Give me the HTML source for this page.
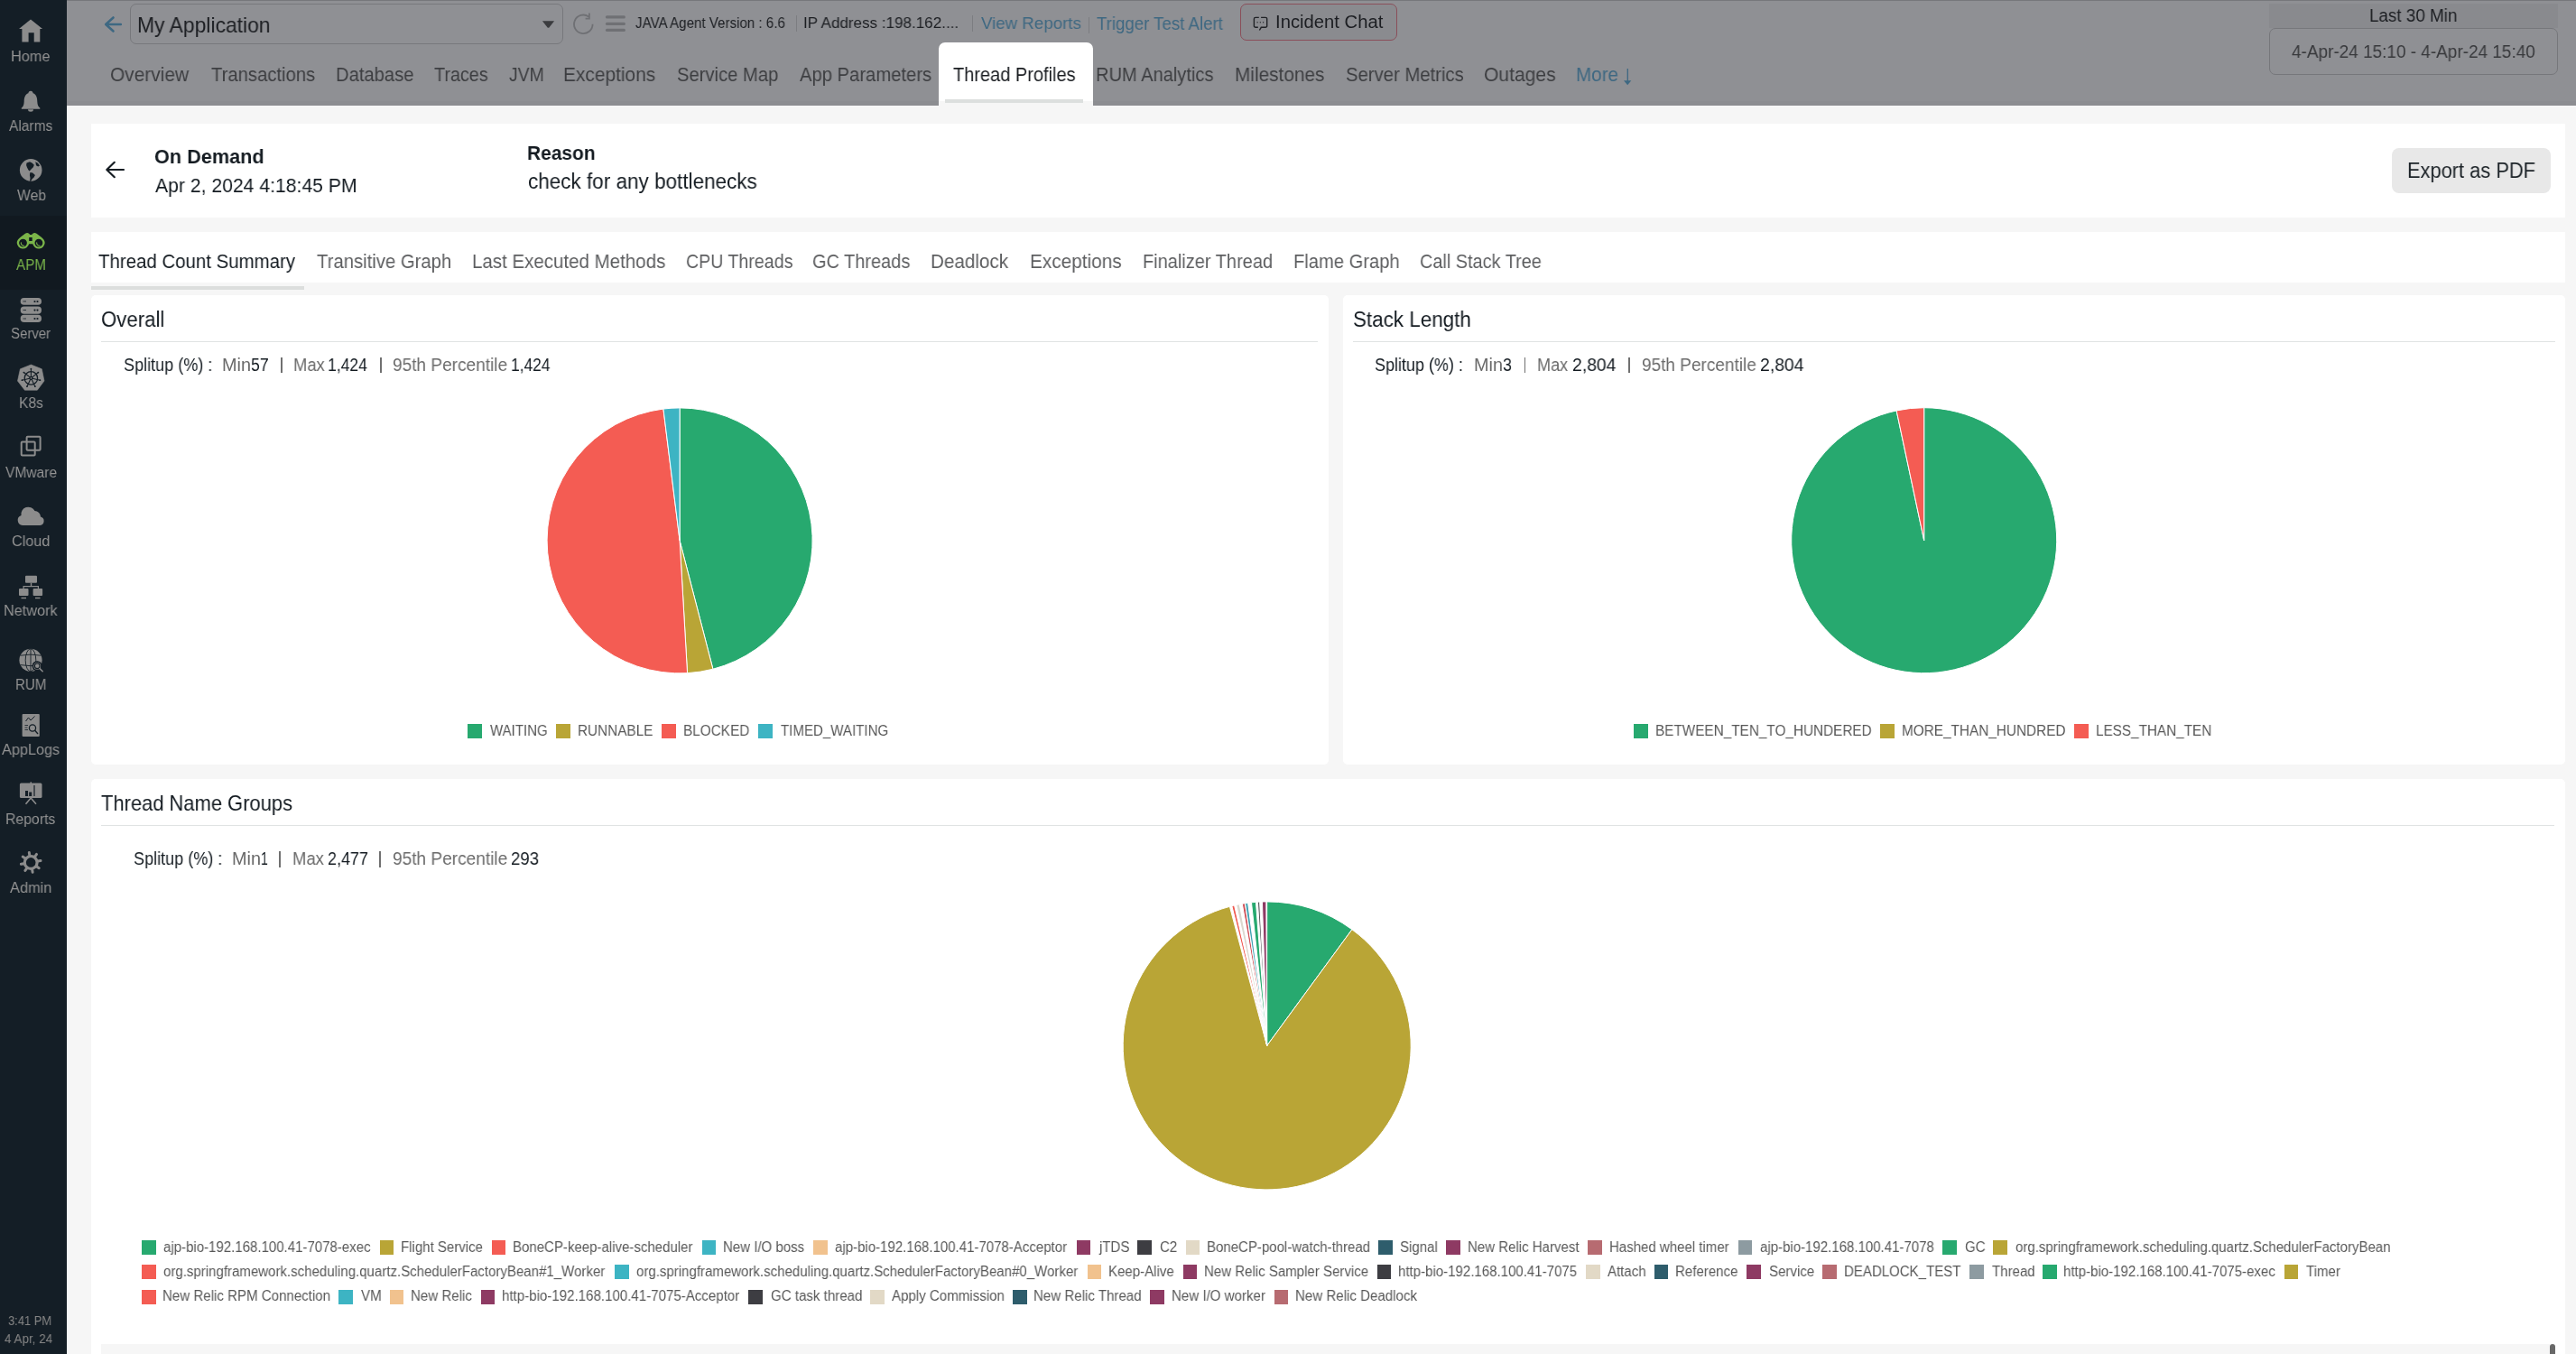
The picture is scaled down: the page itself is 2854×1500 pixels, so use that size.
<!DOCTYPE html>
<html><head><meta charset="utf-8">
<style>
html,body{margin:0;padding:0;overflow:hidden;}
body{width:2854px;height:1500px;overflow:hidden;position:relative;background:#f6f6f6;font-family:"Liberation Sans",sans-serif;}
.abs{position:absolute;}
.t{position:absolute;white-space:nowrap;transform-origin:0 0;font-family:"Liberation Sans",sans-serif;will-change:transform;}
.sq{position:absolute;width:15.7px;height:15.7px;}
.bar{position:absolute;width:1.5px;height:17.5px;background:#707070;}
#sb{position:absolute;left:0;top:0;width:74px;height:1500px;background:#141e26;}
#hd{position:absolute;left:74px;top:0;width:2780px;height:117px;background:#8f9094;}
.card{position:absolute;background:#fff;}
.line{position:absolute;height:1px;background:#e0e3e3;}
.sep{position:absolute;width:1px;background:#7c7d81;}
</style></head><body>
<div id="sb"></div>
<div class="abs" style="left:0;top:239px;width:74px;height:82px;background:#111920"></div>
<div id="hd"></div>
<div class="abs" style="left:74px;top:0;width:2780px;height:1px;background:#76777b"></div>
<div class="abs" style="left:74px;top:111.5px;width:2780px;height:5.5px;background:#8c8d91"></div>

<!-- header widgets -->
<div class="abs" style="left:144px;top:4px;width:477.6px;height:42.6px;border:1px solid #77787c;border-radius:7px;"></div>
<div class="sep" style="left:882.2px;top:16.5px;height:18px"></div>
<div class="sep" style="left:1077.1px;top:16.5px;height:18px"></div>
<div class="sep" style="left:1205.9px;top:18.9px;height:17.7px"></div>
<div class="abs" style="left:1374px;top:4.2px;width:172px;height:38.5px;border:1px solid #8a4f5a;border-radius:7px;background:#8a8b8f"></div>
<div class="abs" style="left:1040px;top:47px;width:170.8px;height:70px;background:#fff;border-radius:7px 7px 0 0"></div>
<div class="abs" style="left:1040px;top:111.5px;width:170.8px;height:5.5px;background:#f6f6f6"></div>
<div class="abs" style="left:1047px;top:110px;width:153px;height:3.6px;background:#dcdfde"></div>
<div class="abs" style="left:2514px;top:4px;width:320px;height:26.5px;background:#898a8e"></div>
<div class="abs" style="left:2514px;top:31.3px;width:318px;height:49.4px;border:1px solid #76777b;border-radius:7px"></div>

<svg class="abs" style="left:0;top:0" width="2854" height="120" viewBox="0 0 2854 120">
 <!-- header back arrow -->
 <path d="M133.8 27H117.5M125.5 19.5L117.2 27L125.5 34.5" fill="none" stroke="#3e6882" stroke-width="2.6" stroke-linecap="round" stroke-linejoin="round"/>
 <!-- caret -->
 <path d="M600.9 23.3H614.1L608.6 30.2Q607.5 31.3 606.4 30.2Z" fill="#3a3b3e"/>
 <!-- refresh -->
 <path d="M652.2 18.4A10.3 10.3 0 1 0 656.6 26.8" fill="none" stroke="#6f7074" stroke-width="1.8"/>
 <path d="M652.9 14.6V20.7H648.6" fill="none" stroke="#6f7074" stroke-width="1.8"/>
 <!-- hamburger -->
 <rect x="670.9" y="17.2" width="22" height="3.3" rx="1.6" fill="#6f7074"/>
 <rect x="670.9" y="24.7" width="22" height="3.3" rx="1.6" fill="#6f7074"/>
 <rect x="670.9" y="31.8" width="22" height="3.3" rx="1.6" fill="#6f7074"/>
 <!-- chat icon -->
 <path d="M1394.8 19.4H1391A1.6 1.6 0 0 0 1389.4 21V28.7A1.6 1.6 0 0 0 1391 30.3H1393.8M1397.1 19.4H1402.1A1.6 1.6 0 0 1 1403.7 21V28.7A1.6 1.6 0 0 1 1402.1 30.3H1397.3L1395.4 33.5" fill="none" stroke="#202226" stroke-width="1.4"/>
 <ellipse cx="1393.1" cy="24.7" rx="0.6" ry="0.8" fill="#202226"/><ellipse cx="1396.3" cy="24.7" rx="0.6" ry="0.8" fill="#202226"/><ellipse cx="1399.6" cy="24.7" rx="0.6" ry="0.8" fill="#202226"/>
 <!-- More arrow -->
 <path d="M1803.3 76V91" fill="none" stroke="#3e6882" stroke-width="1.3"/><path d="M1799 89.3H1807.3L1803.2 94.2Z" fill="#3e6882"/>
</svg>

<!-- content cards -->
<div class="card" style="left:101px;top:137px;width:2741px;height:104px"></div>
<div class="abs" style="left:2650px;top:164px;width:176px;height:49.7px;background:#e8e8e8;border-radius:8px"></div>
<div class="card" style="left:101px;top:257px;width:2741px;height:56px"></div>
<div class="abs" style="left:101px;top:317px;width:236px;height:4px;background:#dcdedd"></div>
<div class="card" style="left:101px;top:327px;width:1371px;height:520px;border-radius:5px"></div>
<div class="card" style="left:1488px;top:327px;width:1354px;height:520px;border-radius:5px"></div>
<div class="card" style="left:101px;top:863px;width:2741px;height:637px;border-radius:5px 5px 0 0"></div>
<div class="line" style="left:112px;top:378px;width:1348px"></div>
<div class="line" style="left:1499px;top:378px;width:1331.5px"></div>
<div class="line" style="left:112px;top:914px;width:2718px"></div>
<div class="abs" style="left:112px;top:1489px;width:2712.6px;height:11px;background:#f6f6f6"></div>
<div class="abs" style="left:2825px;top:1489px;width:6px;height:11px;background:#686868;border-radius:3px 3px 0 0"></div>

<svg class="abs" style="left:0;top:120px" width="200" height="100" viewBox="0 120 200 100">
 <path d="M137 188H118.5M126.8 179.8L118.3 188L126.8 196.2" fill="none" stroke="#161d23" stroke-width="2.2" stroke-linecap="round" stroke-linejoin="round"/>
</svg>

<svg class="abs" style="left:0;top:0" width="2854" height="1500" viewBox="0 0 2854 1500"><path d="M753.10 598.90L753.10 451.90A147 147 0 0 1 789.91 741.22Z" fill="#27a96f" stroke="#fff" stroke-width="1" stroke-linejoin="round"/><path d="M753.10 598.90L789.91 741.22A147 147 0 0 1 761.56 745.66Z" fill="#b9a536" stroke="#fff" stroke-width="1" stroke-linejoin="round"/><path d="M753.10 598.90L761.56 745.66A147 147 0 0 1 734.93 453.03Z" fill="#f45c53" stroke="#fff" stroke-width="1" stroke-linejoin="round"/><path d="M753.10 598.90L734.93 453.03A147 147 0 0 1 753.10 451.90Z" fill="#3db4c3" stroke="#fff" stroke-width="1" stroke-linejoin="round"/><path d="M2131.70 598.70L2131.70 451.70A147 147 0 1 1 2101.14 454.91Z" fill="#27a96f" stroke="#fff" stroke-width="1" stroke-linejoin="round"/><path d="M2131.70 598.70L2101.14 454.91A147 147 0 0 1 2131.70 451.70Z" fill="#f45c53" stroke="#fff" stroke-width="1" stroke-linejoin="round"/><path d="M1403.70 1158.40L1403.70 998.90A159.5 159.5 0 0 1 1497.90 1029.69Z" fill="#27a96f" stroke="#fff" stroke-width="1" stroke-linejoin="round"/><path d="M1403.70 1158.40L1497.90 1029.69A159.5 159.5 0 1 1 1362.42 1004.33Z" fill="#b9a536" stroke="#fff" stroke-width="1" stroke-linejoin="round"/><path d="M1403.70 1158.40L1364.84 1003.71A159.5 159.5 0 0 1 1367.55 1003.05Z" fill="#f0584f" stroke="#fff" stroke-width="1" stroke-linejoin="round"/><path d="M1403.70 1158.40L1369.72 1002.56A159.5 159.5 0 0 1 1373.27 1001.83Z" fill="#dcd8cf" stroke="#fff" stroke-width="1" stroke-linejoin="round"/><path d="M1403.70 1158.40L1376.28 1001.28A159.5 159.5 0 0 1 1379.30 1000.78Z" fill="#cf5158" stroke="#fff" stroke-width="1" stroke-linejoin="round"/><path d="M1403.70 1158.40L1379.57 1000.74A159.5 159.5 0 0 1 1382.61 1000.30Z" fill="#41a3b3" stroke="#fff" stroke-width="1" stroke-linejoin="round"/><path d="M1403.70 1158.40L1386.47 999.83A159.5 159.5 0 0 1 1391.46 999.37Z" fill="#27a96f" stroke="#fff" stroke-width="1" stroke-linejoin="round"/><path d="M1403.70 1158.40L1393.41 999.23A159.5 159.5 0 0 1 1395.63 999.10Z" fill="#55565a" stroke="#fff" stroke-width="1" stroke-linejoin="round"/><path d="M1403.70 1158.40L1398.41 998.99A159.5 159.5 0 0 1 1402.86 998.90Z" fill="#8e3a63" stroke="#fff" stroke-width="1" stroke-linejoin="round"/></svg>
<div class="sq" style="left:518.10px;top:802.30px;background:#27a96f"></div><div class="sq" style="left:616.10px;top:802.30px;background:#b9a536"></div><div class="sq" style="left:733.20px;top:802.30px;background:#f45c53"></div><div class="sq" style="left:840.30px;top:802.30px;background:#3db4c3"></div><div class="sq" style="left:1810.20px;top:802.30px;background:#27a96f"></div><div class="sq" style="left:2083.10px;top:802.30px;background:#b9a536"></div><div class="sq" style="left:2298.30px;top:802.30px;background:#f45c53"></div><div class="sq" style="left:157.00px;top:1374.10px;background:#27a96f"></div><div class="sq" style="left:420.54px;top:1374.10px;background:#b9a536"></div><div class="sq" style="left:544.64px;top:1374.10px;background:#f45c53"></div><div class="sq" style="left:777.78px;top:1374.10px;background:#3db4c3"></div><div class="sq" style="left:900.95px;top:1374.10px;background:#f1c28e"></div><div class="sq" style="left:1192.65px;top:1374.10px;background:#8e3a63"></div><div class="sq" style="left:1260.32px;top:1374.10px;background:#3d3d42"></div><div class="sq" style="left:1313.60px;top:1374.10px;background:#e2d9c6"></div><div class="sq" style="left:1526.91px;top:1374.10px;background:#2e5d6c"></div><div class="sq" style="left:1602.13px;top:1374.10px;background:#8e3a63"></div><div class="sq" style="left:1759.18px;top:1374.10px;background:#b76b71"></div><div class="sq" style="left:1925.55px;top:1374.10px;background:#8d9ba1"></div><div class="sq" style="left:2152.47px;top:1374.10px;background:#27a96f"></div><div class="sq" style="left:2208.47px;top:1374.10px;background:#b9a536"></div><div class="sq" style="left:157.00px;top:1401.20px;background:#f45c53"></div><div class="sq" style="left:680.85px;top:1401.20px;background:#3db4c3"></div><div class="sq" style="left:1204.70px;top:1401.20px;background:#f1c28e"></div><div class="sq" style="left:1310.53px;top:1401.20px;background:#8e3a63"></div><div class="sq" style="left:1525.75px;top:1401.20px;background:#3d3d42"></div><div class="sq" style="left:1756.94px;top:1401.20px;background:#e2d9c6"></div><div class="sq" style="left:1832.70px;top:1401.20px;background:#2e5d6c"></div><div class="sq" style="left:1935.19px;top:1401.20px;background:#8e3a63"></div><div class="sq" style="left:2019.40px;top:1401.20px;background:#b76b71"></div><div class="sq" style="left:2182.11px;top:1401.20px;background:#8d9ba1"></div><div class="sq" style="left:2262.89px;top:1401.20px;background:#27a96f"></div><div class="sq" style="left:2530.73px;top:1401.20px;background:#b9a536"></div><div class="sq" style="left:157.00px;top:1429.10px;background:#f45c53"></div><div class="sq" style="left:375.26px;top:1429.10px;background:#3db4c3"></div><div class="sq" style="left:431.57px;top:1429.10px;background:#f1c28e"></div><div class="sq" style="left:532.51px;top:1429.10px;background:#8e3a63"></div><div class="sq" style="left:829.44px;top:1429.10px;background:#3d3d42"></div><div class="sq" style="left:964.00px;top:1429.10px;background:#e2d9c6"></div><div class="sq" style="left:1122.02px;top:1429.10px;background:#2e5d6c"></div><div class="sq" style="left:1274.08px;top:1429.10px;background:#8e3a63"></div><div class="sq" style="left:1411.67px;top:1429.10px;background:#b76b71"></div>
<div class="bar" style="left:311.05px;top:395.70px"></div><div class="bar" style="left:421.05px;top:395.70px"></div><div class="bar" style="left:1688.75px;top:395.70px"></div><div class="bar" style="left:1804.25px;top:395.70px"></div><div class="bar" style="left:309.25px;top:943.20px"></div><div class="bar" style="left:420.05px;top:943.20px"></div>

<!-- sidebar icons -->
<svg class="abs" style="left:0;top:0" width="74" height="1000" viewBox="0 0 74 1000">
 <g fill="#8c8c8c">
  <!-- home -->
  <path d="M34 21.6L47.1 32H44.3V46.6H37.7V36.2H31.6V46.6H24.4V32H21Z"/>
  <!-- bell -->
  <path d="M34 100.8C36 100.8 36.5 102.5 36.6 103.2C40.5 104.5 41.2 108.5 41.3 112.5C41.4 116.5 42.5 118.3 44.3 119.5V120.8H23.8V119.5C25.6 118.3 26.6 116.5 26.7 112.5C26.8 108.5 27.5 104.5 31.4 103.2C31.5 102.5 32 100.8 34 100.8Z"/>
  <path d="M31 121.3H37A3 2.5 0 0 1 31 121.3Z"/>
  <!-- globe -->
  <circle cx="34.2" cy="188.4" r="12.3"/>
 </g>
 <path d="M29.5 180.5L33 179.3L35.5 180.5L37.8 182.8L36.8 185.3L35 187L33.6 188.6L32.6 189.6L31.4 188.2L30 185.6L29.1 183Z M39.3 179.3L42 180.8L44 183.6L42.2 184.6L40 183.2Z M33.4 190.9L36.2 191.6L38.9 194L37.6 196.6L35.6 198.2L34.2 200.8L33 200.8L33.5 197.2L32.9 194Z" fill="#141e26"/>
 <!-- binoculars -->
 <path fill="#7ab54a" fill-rule="evenodd" d="M18.7 269.1A6.8 6.8 0 0 0 32.1 270.2H36.3A6.8 6.8 0 0 0 49.7 269.1C49.7 266.5 47.9 264.5 45.5 262.5L40.5 258.8Q38.2 257.2 36.3 258.8L35.2 260H33.2L32.1 258.8Q30.2 257.2 27.9 258.8L23 262.5C20.5 264.5 18.7 266.5 18.7 269.1Z M21.1 269.1A4.4 4.4 0 1 0 29.9 269.1A4.4 4.4 0 1 0 21.1 269.1Z M38.5 269.1A4.4 4.4 0 1 0 47.3 269.1A4.4 4.4 0 1 0 38.5 269.1Z M32.2 263.1H35.7V266.9H32.2Z"/>
 <path d="M23.3 268.8A3 3 0 0 0 26.8 272.2M40.7 268.8A3 3 0 0 0 44.2 272.2" fill="none" stroke="#7ab54a" stroke-width="1.1" stroke-linecap="round"/>
 <circle cx="30.5" cy="261.5" r="0.4" fill="#d9a520"/><circle cx="38.5" cy="261.5" r="0.4" fill="#d9a520"/>
 <g fill="#8c8c8c">
  <!-- server -->
  <rect x="22.7" y="330" width="23.3" height="7.7" rx="3.8"/>
  <rect x="22.7" y="339.4" width="23.3" height="8.3" rx="4"/>
  <rect x="22.7" y="348.8" width="23.3" height="8.3" rx="4"/>
 </g>
 <g fill="#141e26">
  <rect x="25.5" y="333.5" width="3.5" height="0.8"/><circle cx="38.5" cy="334" r="1.1"/><circle cx="41.5" cy="334" r="1.1"/>
  <rect x="25.5" y="343.2" width="3.5" height="0.8"/><circle cx="38.5" cy="343.6" r="1.1"/><circle cx="41.5" cy="343.6" r="1.1"/>
  <rect x="25.5" y="352.6" width="3.5" height="0.8"/><circle cx="38.5" cy="353" r="1.1"/><circle cx="41.5" cy="353" r="1.1"/>
 </g>
 <!-- k8s heptagon -->
 <path d="M34.4 404L46.3 408.8L49 422L41.3 432.2H27.4L19.5 422L22.4 408.8Z" fill="#8c8c8c" stroke="#8c8c8c" stroke-width="0.6" stroke-linejoin="round"/>
 <circle cx="34.4" cy="418.9" r="7.2" fill="none" stroke="#141e26" stroke-width="1.3"/>
 <circle cx="34.4" cy="418.9" r="1.5" fill="none" stroke="#141e26" stroke-width="1.3"/>
 <path d="M34.40 417.30L34.40 408.60M35.65 417.90L42.45 412.48M35.96 419.26L44.44 421.19M35.09 420.34L38.87 428.18M33.71 420.34L29.93 428.18M32.84 419.26L24.36 421.19M33.15 417.90L26.35 412.48" stroke="#141e26" stroke-width="1.1" stroke-linecap="round"/>
 <circle cx="34.40" cy="408.70" r="0.9" fill="#141e26"/><circle cx="42.37" cy="412.54" r="0.9" fill="#141e26"/><circle cx="44.34" cy="421.17" r="0.9" fill="#141e26"/><circle cx="38.83" cy="428.09" r="0.9" fill="#141e26"/><circle cx="29.97" cy="428.09" r="0.9" fill="#141e26"/><circle cx="24.46" cy="421.17" r="0.9" fill="#141e26"/><circle cx="26.43" cy="412.54" r="0.9" fill="#141e26"/>
 <!-- vmware -->
 <g fill="none" stroke="#8c8c8c" stroke-width="2">
  <rect x="29.6" y="483.7" width="15" height="15" rx="1"/>
  <rect x="23.7" y="489.6" width="15" height="15" rx="1"/>
 </g>
 <!-- cloud -->
 <path d="M25 581.9A5.6 5.6 0 0 1 23.5 571A8 8 0 0 1 38.5 566A6.5 6.5 0 0 1 45 572.5A4.8 4.8 0 0 1 44.5 581.9Z" fill="#8c8c8c"/>
 <!-- network -->
 <g fill="#8c8c8c">
  <rect x="28" y="637.7" width="13" height="8" rx="1"/>
  <rect x="21" y="652" width="10.5" height="8" rx="1"/>
  <rect x="36.6" y="652" width="10.5" height="8" rx="1"/>
  <rect x="33.8" y="645.7" width="1.4" height="4"/>
  <rect x="26" y="649" width="17" height="1.2"/>
  <rect x="25.5" y="649" width="1.2" height="3"/><rect x="41.8" y="649" width="1.2" height="3"/>
  <rect x="23.5" y="661.8" width="5.5" height="1.4"/><rect x="39" y="661.8" width="5.5" height="1.4"/>
 </g>
 <!-- rum globe -->
 <circle cx="34" cy="731.3" r="12.6" fill="#8c8c8c"/>
 <g fill="none" stroke="#141e26" stroke-width="0.9">
  <ellipse cx="34" cy="731.3" rx="5.8" ry="12.6"/><path d="M34 718.7V743.9M22.5 726.2Q34 724 45.5 726.2M22.5 736.6Q34 738.8 45.5 736.6"/>
 </g>
 <circle cx="41.2" cy="737.8" r="5.6" fill="#141e26"/>
 <circle cx="41.2" cy="737.8" r="3.9" fill="#8c8c8c"/>
 <circle cx="41.2" cy="737.8" r="2.8" fill="#8c8c8c" stroke="#141e26" stroke-width="1.1"/>
 <path d="M44 740.6L47.2 743.8" stroke="#8c8c8c" stroke-width="1.5" stroke-linecap="round"/>
 <!-- applogs -->
 <rect x="24.6" y="791" width="19.2" height="25" rx="1" fill="#8c8c8c"/>
 <path d="M28.5 799L31.5 795L34 798L38.5 793.5" fill="none" stroke="#141e26" stroke-width="1"/>
 <path d="M27.5 803.5H31M27.5 806H30.5M27.5 808.5H31" stroke="#141e26" stroke-width="0.8"/>
 <circle cx="36" cy="806.5" r="3.6" fill="none" stroke="#141e26" stroke-width="1.3"/>
 <path d="M38.5 809L42 813" stroke="#141e26" stroke-width="1.3"/>
 <!-- reports -->
 <rect x="21.9" y="867.5" width="24.6" height="16.5" rx="1.5" fill="#8c8c8c"/>
 <rect x="33.5" y="866.3" width="1.5" height="2" fill="#8c8c8c"/>
 <path d="M34.2 884L28.5 890.7M34.2 884L40 890.7" stroke="#8c8c8c" stroke-width="1.6"/>
 <rect x="28" y="876" width="3" height="6" fill="#141e26"/><rect x="32.2" y="877.5" width="3" height="4.5" fill="#141e26"/>
 <rect x="37" y="870" width="2" height="12" fill="#141e26" opacity="0.6"/>
 <!-- gear -->
 <circle cx="34.2" cy="955.4" r="6.9" fill="none" stroke="#8c8c8c" stroke-width="3.2"/>
 <path d="M32.90 948.01L32.29 944.57M38.50 949.26L40.51 946.39M41.59 954.10L45.03 953.49M40.34 959.70L43.21 961.71M35.50 962.79L36.11 966.23M29.90 961.54L27.89 964.41M26.81 956.70L23.37 957.31M28.06 951.10L25.19 949.09" stroke="#8c8c8c" stroke-width="3" stroke-linecap="round"/>
</svg>

<div class="t" style="left:12.12px;top:55px;font-size:16.7px;line-height:16.7px;color:#939393;transform:scaleX(0.9784);">Home</div>
<div class="t" style="left:10.20px;top:132px;font-size:16.7px;line-height:16.7px;color:#939393;transform:scaleX(0.9307);">Alarms</div>
<div class="t" style="left:18.60px;top:209px;font-size:16.7px;line-height:16.7px;color:#939393;transform:scaleX(0.9428);">Web</div>
<div class="t" style="left:12.00px;top:362px;font-size:16.7px;line-height:16.7px;color:#939393;transform:scaleX(0.8973);">Server</div>
<div class="t" style="left:20.67px;top:439px;font-size:16.7px;line-height:16.7px;color:#939393;transform:scaleX(0.9303);">K8s</div>
<div class="t" style="left:6.10px;top:516px;font-size:16.7px;line-height:16.7px;color:#939393;transform:scaleX(0.9324);">VMware</div>
<div class="t" style="left:13.10px;top:592px;font-size:16.7px;line-height:16.7px;color:#939393;transform:scaleX(0.9718);">Cloud</div>
<div class="t" style="left:3.73px;top:669px;font-size:16.7px;line-height:16.7px;color:#939393;transform:scaleX(0.9744);">Network</div>
<div class="t" style="left:16.79px;top:751px;font-size:16.7px;line-height:16.7px;color:#939393;transform:scaleX(0.9058);">RUM</div>
<div class="t" style="left:2.40px;top:823px;font-size:16.7px;line-height:16.7px;color:#939393;transform:scaleX(0.9735);">AppLogs</div>
<div class="t" style="left:6.15px;top:900px;font-size:16.7px;line-height:16.7px;color:#939393;transform:scaleX(0.9477);">Reports</div>
<div class="t" style="left:11.10px;top:976px;font-size:16.7px;line-height:16.7px;color:#939393;transform:scaleX(0.9804);">Admin</div>
<div class="t" style="left:18.30px;top:286px;font-size:16.7px;line-height:16.7px;color:#7ab54a;transform:scaleX(0.9104);">APM</div>
<div class="t" style="left:8.90px;top:1455px;font-size:15.5px;line-height:15.5px;color:#858585;transform:scaleX(0.8326);">3:41 PM</div>
<div class="t" style="left:5.30px;top:1475px;font-size:15.5px;line-height:15.5px;color:#858585;transform:scaleX(0.8698);">4 Apr, 24</div>
<div class="t" style="left:151.81px;top:17px;font-size:23.2px;line-height:23.2px;color:#1c1e22;transform:scaleX(0.9873);">My Application</div>
<div class="t" style="left:703.90px;top:17px;font-size:17.3px;line-height:17.3px;color:#1c1e22;transform:scaleX(0.8749);">JAVA Agent Version : 6.6</div>
<div class="t" style="left:890.21px;top:17px;font-size:17.3px;line-height:17.3px;color:#1c1e22;transform:scaleX(0.9862);">IP Address :198.162....</div>
<div class="t" style="left:1086.80px;top:16px;font-size:19px;line-height:19px;color:#3e6882;transform:scaleX(0.9844);">View Reports</div>
<div class="t" style="left:1215.40px;top:17px;font-size:19.3px;line-height:19.3px;color:#3e6882;transform:scaleX(0.9665);">Trigger Test Alert</div>
<div class="t" style="left:1413.49px;top:14px;font-size:20.1px;line-height:20.1px;color:#1c1e22;transform:scaleX(1.0083);">Incident Chat</div>
<div class="t" style="left:121.64px;top:72px;font-size:21.7px;line-height:21.7px;color:#3d3e41;transform:scaleX(0.9630);">Overview</div>
<div class="t" style="left:233.50px;top:72px;font-size:21.7px;line-height:21.7px;color:#3d3e41;transform:scaleX(0.9336);">Transactions</div>
<div class="t" style="left:371.57px;top:72px;font-size:21.7px;line-height:21.7px;color:#3d3e41;transform:scaleX(0.9316);">Database</div>
<div class="t" style="left:481.10px;top:72px;font-size:21.7px;line-height:21.7px;color:#3d3e41;transform:scaleX(0.9112);">Traces</div>
<div class="t" style="left:563.70px;top:72px;font-size:21.7px;line-height:21.7px;color:#3d3e41;transform:scaleX(0.8934);">JVM</div>
<div class="t" style="left:624.24px;top:72px;font-size:21.7px;line-height:21.7px;color:#3d3e41;transform:scaleX(0.9635);">Exceptions</div>
<div class="t" style="left:749.80px;top:72px;font-size:21.7px;line-height:21.7px;color:#3d3e41;transform:scaleX(0.9314);">Service Map</div>
<div class="t" style="left:885.70px;top:72px;font-size:21.7px;line-height:21.7px;color:#3d3e41;transform:scaleX(0.9327);">App Parameters</div>
<div class="t" style="left:1055.70px;top:72px;font-size:21.7px;line-height:21.7px;color:#191c20;transform:scaleX(0.9218);">Thread Profiles</div>
<div class="t" style="left:1214.27px;top:72px;font-size:21.7px;line-height:21.7px;color:#3d3e41;transform:scaleX(0.9253);">RUM Analytics</div>
<div class="t" style="left:1368.24px;top:72px;font-size:21.7px;line-height:21.7px;color:#3d3e41;transform:scaleX(0.9590);">Milestones</div>
<div class="t" style="left:1491.00px;top:72px;font-size:21.7px;line-height:21.7px;color:#3d3e41;transform:scaleX(0.9354);">Server Metrics</div>
<div class="t" style="left:1643.63px;top:72px;font-size:21.7px;line-height:21.7px;color:#3d3e41;transform:scaleX(0.9711);">Outages</div>
<div class="t" style="left:1746.05px;top:72px;font-size:21.7px;line-height:21.7px;color:#3e6882;transform:scaleX(0.9514);">More</div>
<div class="t" style="left:2625.45px;top:8px;font-size:19.9px;line-height:19.9px;color:#1c1e22;transform:scaleX(0.9478);">Last 30 Min</div>
<div class="t" style="left:2539.20px;top:48px;font-size:19.9px;line-height:19.9px;color:#38393c;transform:scaleX(0.9530);">4-Apr-24 15:10 - 4-Apr-24 15:40</div>
<div class="t" style="left:171.30px;top:162px;font-size:22.9px;line-height:22.9px;color:#141b21;font-weight:700;transform:scaleX(0.9468);">On Demand</div>
<div class="t" style="left:171.70px;top:194px;font-size:22.9px;line-height:22.9px;color:#141b21;transform:scaleX(0.9247);">Apr 2, 2024 4:18:45 PM</div>
<div class="t" style="left:583.98px;top:158px;font-size:22.8px;line-height:22.8px;color:#141b21;font-weight:700;transform:scaleX(0.9176);">Reason</div>
<div class="t" style="left:584.60px;top:190px;font-size:23px;line-height:23px;color:#141b21;transform:scaleX(0.9779);">check for any bottlenecks</div>
<div class="t" style="left:2667.06px;top:178px;font-size:23.3px;line-height:23.3px;color:#1a2126;transform:scaleX(0.9371);">Export as PDF</div>
<div class="t" style="left:109.20px;top:279px;font-size:22.5px;line-height:22.5px;color:#141b21;transform:scaleX(0.9085);">Thread Count Summary</div>
<div class="t" style="left:351.30px;top:279px;font-size:22.5px;line-height:22.5px;color:#5d5e60;transform:scaleX(0.9014);">Transitive Graph</div>
<div class="t" style="left:522.69px;top:279px;font-size:22.5px;line-height:22.5px;color:#5d5e60;transform:scaleX(0.9115);">Last Executed Methods</div>
<div class="t" style="left:759.53px;top:279px;font-size:22.5px;line-height:22.5px;color:#5d5e60;transform:scaleX(0.8716);">CPU Threads</div>
<div class="t" style="left:900.31px;top:279px;font-size:22.5px;line-height:22.5px;color:#5d5e60;transform:scaleX(0.8871);">GC Threads</div>
<div class="t" style="left:1031.28px;top:279px;font-size:22.5px;line-height:22.5px;color:#5d5e60;transform:scaleX(0.9182);">Deadlock</div>
<div class="t" style="left:1141.48px;top:279px;font-size:22.5px;line-height:22.5px;color:#5d5e60;transform:scaleX(0.9245);">Exceptions</div>
<div class="t" style="left:1266.21px;top:279px;font-size:22.5px;line-height:22.5px;color:#5d5e60;transform:scaleX(0.8885);">Finalizer Thread</div>
<div class="t" style="left:1433.40px;top:279px;font-size:22.5px;line-height:22.5px;color:#5d5e60;transform:scaleX(0.8961);">Flame Graph</div>
<div class="t" style="left:1573.32px;top:279px;font-size:22.5px;line-height:22.5px;color:#5d5e60;transform:scaleX(0.8841);">Call Stack Tree</div>
<div class="t" style="left:111.85px;top:343px;font-size:23.3px;line-height:23.3px;color:#141b21;transform:scaleX(0.9537);">Overall</div>
<div class="t" style="left:1498.64px;top:343px;font-size:23.3px;line-height:23.3px;color:#141b21;transform:scaleX(0.9624);">Stack Length</div>
<div class="t" style="left:112.10px;top:879px;font-size:23.6px;line-height:23.6px;color:#141b21;transform:scaleX(0.9289);">Thread Name Groups</div>
<div class="t" style="left:136.50px;top:395px;font-size:19.7px;line-height:19.7px;color:#141b21;transform:scaleX(0.9172);">Splitup (%) :</div>
<div class="t" style="left:246.09px;top:395px;font-size:19.7px;line-height:19.7px;color:#6a6a6a;transform:scaleX(1.0110);">Min</div>
<div class="t" style="left:278.20px;top:395px;font-size:19.7px;line-height:19.7px;color:#141b21;transform:scaleX(0.8974);">57</div>
<div class="t" style="left:324.76px;top:395px;font-size:19.7px;line-height:19.7px;color:#6a6a6a;transform:scaleX(0.9354);">Max</div>
<div class="t" style="left:363.31px;top:395px;font-size:19.7px;line-height:19.7px;color:#141b21;transform:scaleX(0.8920);">1,424</div>
<div class="t" style="left:435.40px;top:395px;font-size:19.7px;line-height:19.7px;color:#6a6a6a;transform:scaleX(0.9674);">95th Percentile</div>
<div class="t" style="left:565.52px;top:395px;font-size:19.7px;line-height:19.7px;color:#141b21;transform:scaleX(0.8837);">1,424</div>
<div class="t" style="left:1523.20px;top:395px;font-size:19.7px;line-height:19.7px;color:#141b21;transform:scaleX(0.9125);">Splitup (%) :</div>
<div class="t" style="left:1632.79px;top:395px;font-size:19.7px;line-height:19.7px;color:#6a6a6a;transform:scaleX(1.0110);">Min</div>
<div class="t" style="left:1665.00px;top:395px;font-size:19.7px;line-height:19.7px;color:#141b21;transform:scaleX(0.9091);">3</div>
<div class="t" style="left:1703.18px;top:395px;font-size:19.7px;line-height:19.7px;color:#6a6a6a;transform:scaleX(0.9189);">Max</div>
<div class="t" style="left:1742.00px;top:395px;font-size:19.7px;line-height:19.7px;color:#141b21;transform:scaleX(0.9834);">2,804</div>
<div class="t" style="left:1819.00px;top:395px;font-size:19.7px;line-height:19.7px;color:#6a6a6a;transform:scaleX(0.9651);">95th Percentile</div>
<div class="t" style="left:1949.60px;top:395px;font-size:19.7px;line-height:19.7px;color:#141b21;transform:scaleX(0.9855);">2,804</div>
<div class="t" style="left:147.50px;top:942px;font-size:19.7px;line-height:19.7px;color:#141b21;transform:scaleX(0.9172);">Splitup (%) :</div>
<div class="t" style="left:257.09px;top:942px;font-size:19.7px;line-height:19.7px;color:#6a6a6a;transform:scaleX(1.0110);">Min</div>
<div class="t" style="left:288.78px;top:942px;font-size:19.7px;line-height:19.7px;color:#141b21;transform:scaleX(0.7222);">1</div>
<div class="t" style="left:323.56px;top:942px;font-size:19.7px;line-height:19.7px;color:#6a6a6a;transform:scaleX(0.9381);">Max</div>
<div class="t" style="left:362.50px;top:942px;font-size:19.7px;line-height:19.7px;color:#141b21;transform:scaleX(0.9127);">2,477</div>
<div class="t" style="left:434.70px;top:942px;font-size:19.7px;line-height:19.7px;color:#6a6a6a;transform:scaleX(0.9682);">95th Percentile</div>
<div class="t" style="left:565.80px;top:942px;font-size:19.7px;line-height:19.7px;color:#141b21;transform:scaleX(0.9423);">293</div>
<div class="t" style="left:542.90px;top:801px;font-size:17.4px;line-height:17.4px;color:#575757;transform:scaleX(0.8632);">WAITING</div>
<div class="t" style="left:640.22px;top:801px;font-size:17.4px;line-height:17.4px;color:#575757;transform:scaleX(0.8807);">RUNNABLE</div>
<div class="t" style="left:756.52px;top:801px;font-size:17.4px;line-height:17.4px;color:#575757;transform:scaleX(0.8828);">BLOCKED</div>
<div class="t" style="left:864.50px;top:801px;font-size:17.4px;line-height:17.4px;color:#575757;transform:scaleX(0.8665);">TIMED_WAITING</div>
<div class="t" style="left:1833.72px;top:801px;font-size:17.4px;line-height:17.4px;color:#575757;transform:scaleX(0.8806);">BETWEEN_TEN_TO_HUNDERED</div>
<div class="t" style="left:2106.62px;top:801px;font-size:17.4px;line-height:17.4px;color:#575757;transform:scaleX(0.8818);">MORE_THAN_HUNDRED</div>
<div class="t" style="left:2321.82px;top:801px;font-size:17.4px;line-height:17.4px;color:#575757;transform:scaleX(0.8783);">LESS_THAN_TEN</div>
<div class="t" style="left:181.40px;top:1374px;font-size:16.0px;line-height:16.0px;color:#575757;transform:scaleX(0.9383);">ajp-bio-192.168.100.41-7078-exec</div>
<div class="t" style="left:444.00px;top:1374px;font-size:16.0px;line-height:16.0px;color:#575757;transform:scaleX(0.9383);">Flight Service</div>
<div class="t" style="left:568.10px;top:1374px;font-size:16.0px;line-height:16.0px;color:#575757;transform:scaleX(0.9383);">BoneCP-keep-alive-scheduler</div>
<div class="t" style="left:801.24px;top:1374px;font-size:16.0px;line-height:16.0px;color:#575757;transform:scaleX(0.9383);">New I/O boss</div>
<div class="t" style="left:925.35px;top:1374px;font-size:16.0px;line-height:16.0px;color:#575757;transform:scaleX(0.9383);">ajp-bio-192.168.100.41-7078-Acceptor</div>
<div class="t" style="left:1217.99px;top:1374px;font-size:16.0px;line-height:16.0px;color:#575757;transform:scaleX(0.9383);">jTDS</div>
<div class="t" style="left:1284.72px;top:1374px;font-size:16.0px;line-height:16.0px;color:#575757;transform:scaleX(0.9383);">C2</div>
<div class="t" style="left:1337.07px;top:1374px;font-size:16.0px;line-height:16.0px;color:#575757;transform:scaleX(0.9383);">BoneCP-pool-watch-thread</div>
<div class="t" style="left:1551.31px;top:1374px;font-size:16.0px;line-height:16.0px;color:#575757;transform:scaleX(0.9383);">Signal</div>
<div class="t" style="left:1625.59px;top:1374px;font-size:16.0px;line-height:16.0px;color:#575757;transform:scaleX(0.9383);">New Relic Harvest</div>
<div class="t" style="left:1782.64px;top:1374px;font-size:16.0px;line-height:16.0px;color:#575757;transform:scaleX(0.9383);">Hashed wheel timer</div>
<div class="t" style="left:1949.95px;top:1374px;font-size:16.0px;line-height:16.0px;color:#575757;transform:scaleX(0.9383);">ajp-bio-192.168.100.41-7078</div>
<div class="t" style="left:2176.87px;top:1374px;font-size:16.0px;line-height:16.0px;color:#575757;transform:scaleX(0.9383);">GC</div>
<div class="t" style="left:2232.87px;top:1374px;font-size:16.0px;line-height:16.0px;color:#575757;transform:scaleX(0.9383);">org.springframework.scheduling.quartz.SchedulerFactoryBean</div>
<div class="t" style="left:181.40px;top:1401px;font-size:16.0px;line-height:16.0px;color:#575757;transform:scaleX(0.9393);">org.springframework.scheduling.quartz.SchedulerFactoryBean#1_Worker</div>
<div class="t" style="left:705.25px;top:1401px;font-size:16.0px;line-height:16.0px;color:#575757;transform:scaleX(0.9393);">org.springframework.scheduling.quartz.SchedulerFactoryBean#0_Worker</div>
<div class="t" style="left:1228.16px;top:1401px;font-size:16.0px;line-height:16.0px;color:#575757;transform:scaleX(0.9393);">Keep-Alive</div>
<div class="t" style="left:1333.99px;top:1401px;font-size:16.0px;line-height:16.0px;color:#575757;transform:scaleX(0.9393);">New Relic Sampler Service</div>
<div class="t" style="left:1549.21px;top:1401px;font-size:16.0px;line-height:16.0px;color:#575757;transform:scaleX(0.9393);">http-bio-192.168.100.41-7075</div>
<div class="t" style="left:1781.34px;top:1401px;font-size:16.0px;line-height:16.0px;color:#575757;transform:scaleX(0.9393);">Attach</div>
<div class="t" style="left:1856.16px;top:1401px;font-size:16.0px;line-height:16.0px;color:#575757;transform:scaleX(0.9393);">Reference</div>
<div class="t" style="left:1959.59px;top:1401px;font-size:16.0px;line-height:16.0px;color:#575757;transform:scaleX(0.9393);">Service</div>
<div class="t" style="left:2042.86px;top:1401px;font-size:16.0px;line-height:16.0px;color:#575757;transform:scaleX(0.9393);">DEADLOCK_TEST</div>
<div class="t" style="left:2206.51px;top:1401px;font-size:16.0px;line-height:16.0px;color:#575757;transform:scaleX(0.9393);">Thread</div>
<div class="t" style="left:2286.35px;top:1401px;font-size:16.0px;line-height:16.0px;color:#575757;transform:scaleX(0.9393);">http-bio-192.168.100.41-7075-exec</div>
<div class="t" style="left:2555.13px;top:1401px;font-size:16.0px;line-height:16.0px;color:#575757;transform:scaleX(0.9393);">Timer</div>
<div class="t" style="left:180.46px;top:1428px;font-size:16.0px;line-height:16.0px;color:#575757;transform:scaleX(0.9425);">New Relic RPM Connection</div>
<div class="t" style="left:399.66px;top:1428px;font-size:16.0px;line-height:16.0px;color:#575757;transform:scaleX(0.9425);">VM</div>
<div class="t" style="left:455.03px;top:1428px;font-size:16.0px;line-height:16.0px;color:#575757;transform:scaleX(0.9425);">New Relic</div>
<div class="t" style="left:555.96px;top:1428px;font-size:16.0px;line-height:16.0px;color:#575757;transform:scaleX(0.9425);">http-bio-192.168.100.41-7075-Acceptor</div>
<div class="t" style="left:853.84px;top:1428px;font-size:16.0px;line-height:16.0px;color:#575757;transform:scaleX(0.9425);">GC task thread</div>
<div class="t" style="left:988.40px;top:1428px;font-size:16.0px;line-height:16.0px;color:#575757;transform:scaleX(0.9425);">Apply Commission</div>
<div class="t" style="left:1145.48px;top:1428px;font-size:16.0px;line-height:16.0px;color:#575757;transform:scaleX(0.9425);">New Relic Thread</div>
<div class="t" style="left:1297.53px;top:1428px;font-size:16.0px;line-height:16.0px;color:#575757;transform:scaleX(0.9425);">New I/O worker</div>
<div class="t" style="left:1435.13px;top:1428px;font-size:16.0px;line-height:16.0px;color:#575757;transform:scaleX(0.9425);">New Relic Deadlock</div>
</body></html>
